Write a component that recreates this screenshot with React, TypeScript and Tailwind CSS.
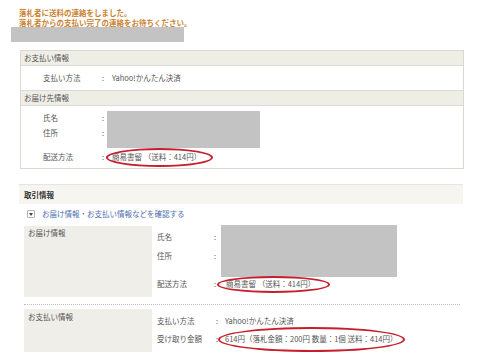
import React from 'react'

// red hand-drawn style marks around values
const Mark = ({ className }: { className: string }) => (
  <span
    className={`pointer-events-none absolute rounded-[50%] border-2 border-[#c81d2c] ${className}`}
  />
)

const App = () => {
  return (
    <div className="h-[364px] w-[480px] overflow-hidden bg-white font-['Noto_Sans_CJK_JP',sans-serif] text-[7.5px] text-[#555]">
      <div className="pl-[19px] pt-[8px] font-bold leading-[9.5px] text-[#c98230]">
        <p>落札者に送料の連絡をしました。</p>
        <p>落札者からの支払い完了の連絡をお待ちください。</p>
      </div>
      <div className="ml-[11px] h-[15px] w-[173px] bg-[#c3c3c3]" />

      {/* summary box */}
      <div className="ml-[20px] mt-[8px] w-[444px] border border-[#d9d9d4]">
        <div className="flex h-[15px] items-center border-b border-[#dcdcd6] bg-[#eeede6] pl-[3px]">
          お支払い情報
        </div>
        <div className="flex h-[24px] items-center pl-[22px]">
          <span className="w-[59px]">支払い方法</span>
          <span className="w-[10px]">:</span>
          <span>Yahoo!かんたん決済</span>
        </div>
        <div className="flex h-[16px] items-center border-y border-[#dcdcd6] bg-[#eeede6] pl-[3px]">
          お届け先情報
        </div>
        <div className="grid grid-cols-[59px_5px_auto] grid-rows-[15px_15px_9px_15px] items-center pb-[4px] pl-[22px] pt-[4px]">
          <span>氏名</span>
          <span>:</span>
          <div className="row-span-3 mt-[1px] h-[37px] w-[153px] self-start bg-[#c3c3c3]" />
          <span>住所</span>
          <span>:</span>
          <span />
          <span />
          <span>配送方法</span>
          <span>:</span>
          <span className="relative pl-[5px]">
            簡易書留 （送料：414円）
            <Mark className="left-[-1px] top-[-3px] h-[19px] w-[107px]" />
          </span>
        </div>
      </div>

      {/* trade info */}
      <div className="ml-[19px] mt-[15px] w-[444px]">
        <div className="flex h-[20px] items-center border-t border-[#e4e4e0] bg-[#f6f5f0] pl-[5px] font-bold text-[#333]">
          取引情報
        </div>
        <div className="ml-[8px] mt-[4px] flex h-[12px] items-center">
          <span className="flex h-[8px] w-[8px] items-center justify-center rounded-[1px] border border-[#b5b5b5] bg-white">
            <svg width="4" height="3" viewBox="0 0 4 3">
              <path d="M0 0h4L2 3z" fill="#444" />
            </svg>
          </span>
          <span className="ml-[7px] text-[#4d6db0]">お届け情報・お支払い情報などを確認する</span>
        </div>

        <div className="mt-[5px] flex items-start">
          <div className="ml-[5px] mt-[1px] h-[71px] w-[128px] bg-[#efeee8] pl-[4px] pt-[1px] leading-[12px]">
            お届け情報
          </div>
          <div className="ml-[5px] grid grid-cols-[57px_7px_auto] grid-rows-[24px_14px_14px_14px] items-center">
            <span>氏名</span>
            <span>:</span>
            <div className="row-span-3 h-[52px] w-[176px] bg-[#c3c3c3]" />
            <span>住所</span>
            <span>:</span>
            <span />
            <span />
            <span>配送方法</span>
            <span>:</span>
            <span className="relative pl-[5px]">
              簡易書留 （送料：414円）
              <Mark className="left-[-4px] top-[-2px] h-[17px] w-[113px]" />
            </span>
          </div>
        </div>

        <div className="ml-[5px] mt-[7px] w-[436px] border-t border-dotted border-[#bdbdbd]" />

        <div className="mt-[4px] flex items-start">
          <div className="ml-[5px] h-[43px] w-[128px] bg-[#efeee8] pl-[4px] pt-[2px] leading-[12px]">
            お支払い情報
          </div>
          <div className="ml-[5px] grid grid-cols-[59px_9px_auto] grid-rows-[14px_14px] items-center gap-y-[4px] pt-[5px]">
            <span>支払い方法</span>
            <span>:</span>
            <span>Yahoo!かんたん決済</span>
            <span>受け取り金額</span>
            <span>:</span>
            <span className="relative">
              614円（落札金額：200円 数量：1個 送料：414円）
              <Mark className="left-[-7px] top-[-6px] h-[25px] w-[187px]" />
            </span>
          </div>
        </div>
      </div>
    </div>
  )
}

export default App
